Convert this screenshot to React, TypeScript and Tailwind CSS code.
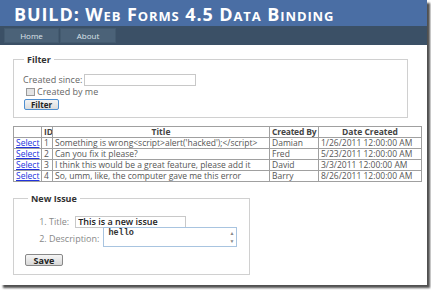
import React from 'react'

const rows = [
  { id: 1, title: "Something is wrong<script>alert('hacked');</script>", by: 'Damian', date: '1/26/2011 12:00:00 AM' },
  { id: 2, title: 'Can you fix it please?', by: 'Fred', date: '5/23/2011 12:00:00 AM' },
  { id: 3, title: 'I think this would be a great feature, please add it', by: 'David', date: '3/3/2011 12:00:00 AM' },
  { id: 4, title: 'So, umm, like, the computer gave me this error', by: 'Barry', date: '8/26/2011 12:00:00 AM' },
]

const td = 'border border-[#a0a0a0] px-[2px] h-[11px] leading-[10px] whitespace-nowrap overflow-hidden'

export default function App() {
  return (
    <div className="w-[431px] h-[290px] bg-white overflow-hidden" style={{ fontFamily: '"Open Sans", "Liberation Sans", sans-serif' }}>
      <div className="w-[427px] h-[285px] bg-white shadow-[3px_3px_2px_#505050] flex flex-col">
        {/* header */}
        <div className="h-[26px] bg-[#4a6ea4] flex items-center pl-[14px]">
          <h1 className="text-white font-bold text-[18px] leading-none tracking-[0.9px] [font-variant:small-caps] pt-[1px]">
            BUILD: Web Forms 4.5 Data Binding
          </h1>
        </div>
        <div className="h-[19px] bg-[#3b5066] flex items-center pl-[4px] gap-[1px]">
          <div className="w-[55px] h-[15px] bg-[#4b6278] border border-[#435a6f] text-[8px] text-[#dde3ea] flex items-center justify-center">Home</div>
          <div className="w-[56px] h-[15px] bg-[#4b6278] border border-[#435a6f] text-[8px] text-[#dde3ea] flex items-center justify-center">About</div>
        </div>

        <div className="px-[13px] text-[9px] text-[#666]">
          {/* filter */}
          <fieldset className="mt-[9px] border border-[#d0d0d0] pl-[9px] pr-2 pb-[6px] mr-[6px]">
            <legend className="px-[3px] ml-[1px] font-bold text-[#333] text-[9px] leading-[11px]">Filter</legend>
            <div className="mt-[8px] flex items-center gap-[2px] h-[13px]">
              <span>Created since:</span>
              <input className="w-[112px] h-[12px] border border-[#c8c8c8] bg-white" />
            </div>
            <label className="flex items-center gap-[2px] mt-[1px] h-[10px] ml-[3px]">
              <span className="w-[9px] h-[8px] border border-[#999] bg-[#e4e4e4] inline-block" />
              <span>Created by me</span>
            </label>
            <button className="mt-[2px] ml-[1px] w-[35px] h-[11px] rounded-[2px] border border-[#4f8fd0] bg-gradient-to-b from-[#f4f4f4] to-[#dcdcdc] text-[8px] font-bold text-[#222] leading-none">
              Filter
            </button>
          </fieldset>

          {/* grid */}
          <table className="mt-[8px] w-[408px] table-fixed border-collapse border border-[#888] text-[8.5px] text-[#555]">
            <colgroup>
              <col className="w-[28px]" />
              <col className="w-[11px]" />
              <col className="w-[217px]" />
              <col className="w-[49px]" />
              <col className="w-[103px]" />
            </colgroup>
            <thead>
              <tr className="font-bold text-[#444]">
                <th className={td}></th>
                <th className={`${td} px-0`}>ID</th>
                <th className={td}>Title</th>
                <th className={`${td} px-0 tracking-[-0.2px]`}>Created By</th>
                <th className={td}>Date Created</th>
              </tr>
            </thead>
            <tbody>
              {rows.map((r) => (
                <tr key={r.id}>
                  <td className={td}>
                    <a className="text-[#2233dd] underline">Select</a>
                  </td>
                  <td className={td}>{r.id}</td>
                  <td className={td}>{r.title}</td>
                  <td className={td}>{r.by}</td>
                  <td className={td}>{r.date}</td>
                </tr>
              ))}
            </tbody>
          </table>

          {/* new issue */}
          <fieldset className="mt-[11px] w-[237px] border border-[#d0d0d0] pl-[11px] pb-[7px]">
            <legend className="px-[3px] ml-[3px] font-bold text-[#333] text-[9px] leading-[11px]">New Issue</legend>
            <ol className="mt-[11px] ml-[24px] list-decimal text-[#888]">
              <li className="h-[12px]">
                <div className="flex items-center gap-[6px]">
                  <span>Title:</span>
                  <input
                    readOnly
                    value="This is a new issue"
                    className="w-[111px] h-[12px] border border-[#c8c8c8] px-[2px] text-[9px] text-[#222] font-semibold"
                  />
                </div>
              </li>
              <li>
                <div className="flex items-end gap-[4px]">
                  <span className="mb-[2px]">Description:</span>
                  <div className="w-[134px] h-[20px] border border-[#a8c4e0] flex bg-white">
                    <div className="flex-1 px-[4px] text-[8.5px] font-bold text-[#333] leading-[10px]" style={{ fontFamily: '"Liberation Mono", monospace' }}>
                      hello
                    </div>
                    <div className="w-[9px] flex flex-col justify-between items-center text-[5px] text-[#888] py-[2px]">
                      <span>▲</span>
                      <span>▼</span>
                    </div>
                  </div>
                </div>
              </li>
            </ol>
            <button className="mt-[7px] w-[38px] h-[12px] rounded-[2px] border border-[#888] bg-gradient-to-b from-[#f6f6f6] to-[#d8d8d8] text-[9px] font-bold text-[#222] leading-none">
              Save
            </button>
          </fieldset>
        </div>
      </div>
    </div>
  )
}
